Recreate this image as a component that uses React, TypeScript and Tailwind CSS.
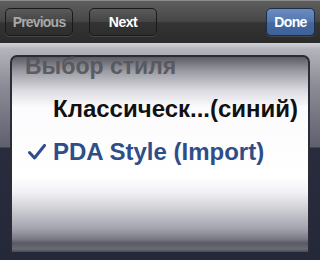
import React from "react";

export default function App() {
  const btnFont = { fontFamily: '"Liberation Sans", Arial, sans-serif' };
  return (
    <div
      className="w-[320px] h-[260px] flex flex-col overflow-hidden bg-[#262a3a]"
      style={btnFont}
    >
      {/* Toolbar */}
      <div className="h-[43px] shrink-0 flex items-center px-[5px] border-t border-[#8c8c8c] bg-[linear-gradient(to_bottom,#5e5e5e_0%,#474747_48%,#343434_52%,#2a2a2a_100%)]">
        <div className="w-[68px] h-[28px] rounded-[5px] border border-[#1a1a1a] flex items-center justify-center bg-[linear-gradient(to_bottom,#5a5a5a_0%,#444_50%,#333_52%,#2e2e2e_100%)] shadow-[0_1px_0_rgba(255,255,255,0.12)]">
          <span className="text-[14px] font-bold tracking-[-0.8px] text-[#a8a8a8]">Previous</span>
        </div>
        <div className="ml-[16px] w-[68px] h-[28px] rounded-[5px] border border-[#1a1a1a] flex items-center justify-center bg-[linear-gradient(to_bottom,#5a5a5a_0%,#444_50%,#333_52%,#2e2e2e_100%)] shadow-[0_1px_0_rgba(255,255,255,0.12)]">
          <span className="text-[14px] font-bold tracking-[-0.5px] text-white">Next</span>
        </div>
        <div className="flex-1" />
        <div className="w-[49px] h-[28px] rounded-[5px] border border-[#1e2d48] flex items-center justify-center bg-[linear-gradient(to_bottom,#6a8cc0_0%,#5277af_50%,#4468a0_52%,#3e6198_100%)] shadow-[0_1px_0_rgba(255,255,255,0.12)]">
          <span className="text-[14px] font-bold tracking-[-0.6px] text-white">Done</span>
        </div>
      </div>

      {/* Picker area */}
      <div className="flex-1 flex flex-col px-[10px] pt-[12px] bg-[linear-gradient(to_bottom,#d2d2d8_0px,#b4b4bc_6px,#8e8e98_40px,#5e606c_104px,#292c3d_105px,#252838_100%)]">
        <div className="h-[197px] rounded-t-[7px] border-2 border-b-0 border-[#2a2c38] flex flex-col bg-[linear-gradient(to_bottom,#5c5c64_0px,#9a9aa2_14px,#dcdce2_34px,#fbfbfd_50px,#ffffff_120px,#f2f2f6_135px,#c8c8d0_155px,#a2a2ae_172px,#7a7a84_182px,#5a5a64_186px,#6a6a74_192px,#4a4a54_195px)]">
          <div className="h-[18px] leading-[18px] pl-[13px] text-[23px] font-bold text-[#55555c] opacity-90 whitespace-nowrap">
            Выбор стиля
          </div>
          <div className="h-[43px] mt-[12px] leading-[43px] pl-[41px] text-[24px] font-bold text-[#111] whitespace-nowrap">
            Классическ...(синий)
          </div>
          <div className="h-[43px] flex items-center whitespace-nowrap">
            <div className="w-[41px] flex justify-end pr-[7px]">
              <svg width="18" height="16" viewBox="0 0 18 16">
                <path
                  d="M1.5 8.5 L6.5 14 L16.5 1.5"
                  fill="none"
                  stroke="#2e4e88"
                  strokeWidth="3"
                  strokeLinecap="round"
                  strokeLinejoin="round"
                />
              </svg>
            </div>
            <span className="leading-[43px] text-[24px] font-bold text-[#2e4e88]">
              PDA Style (Import)
            </span>
          </div>
        </div>
      </div>
    </div>
  );
}
